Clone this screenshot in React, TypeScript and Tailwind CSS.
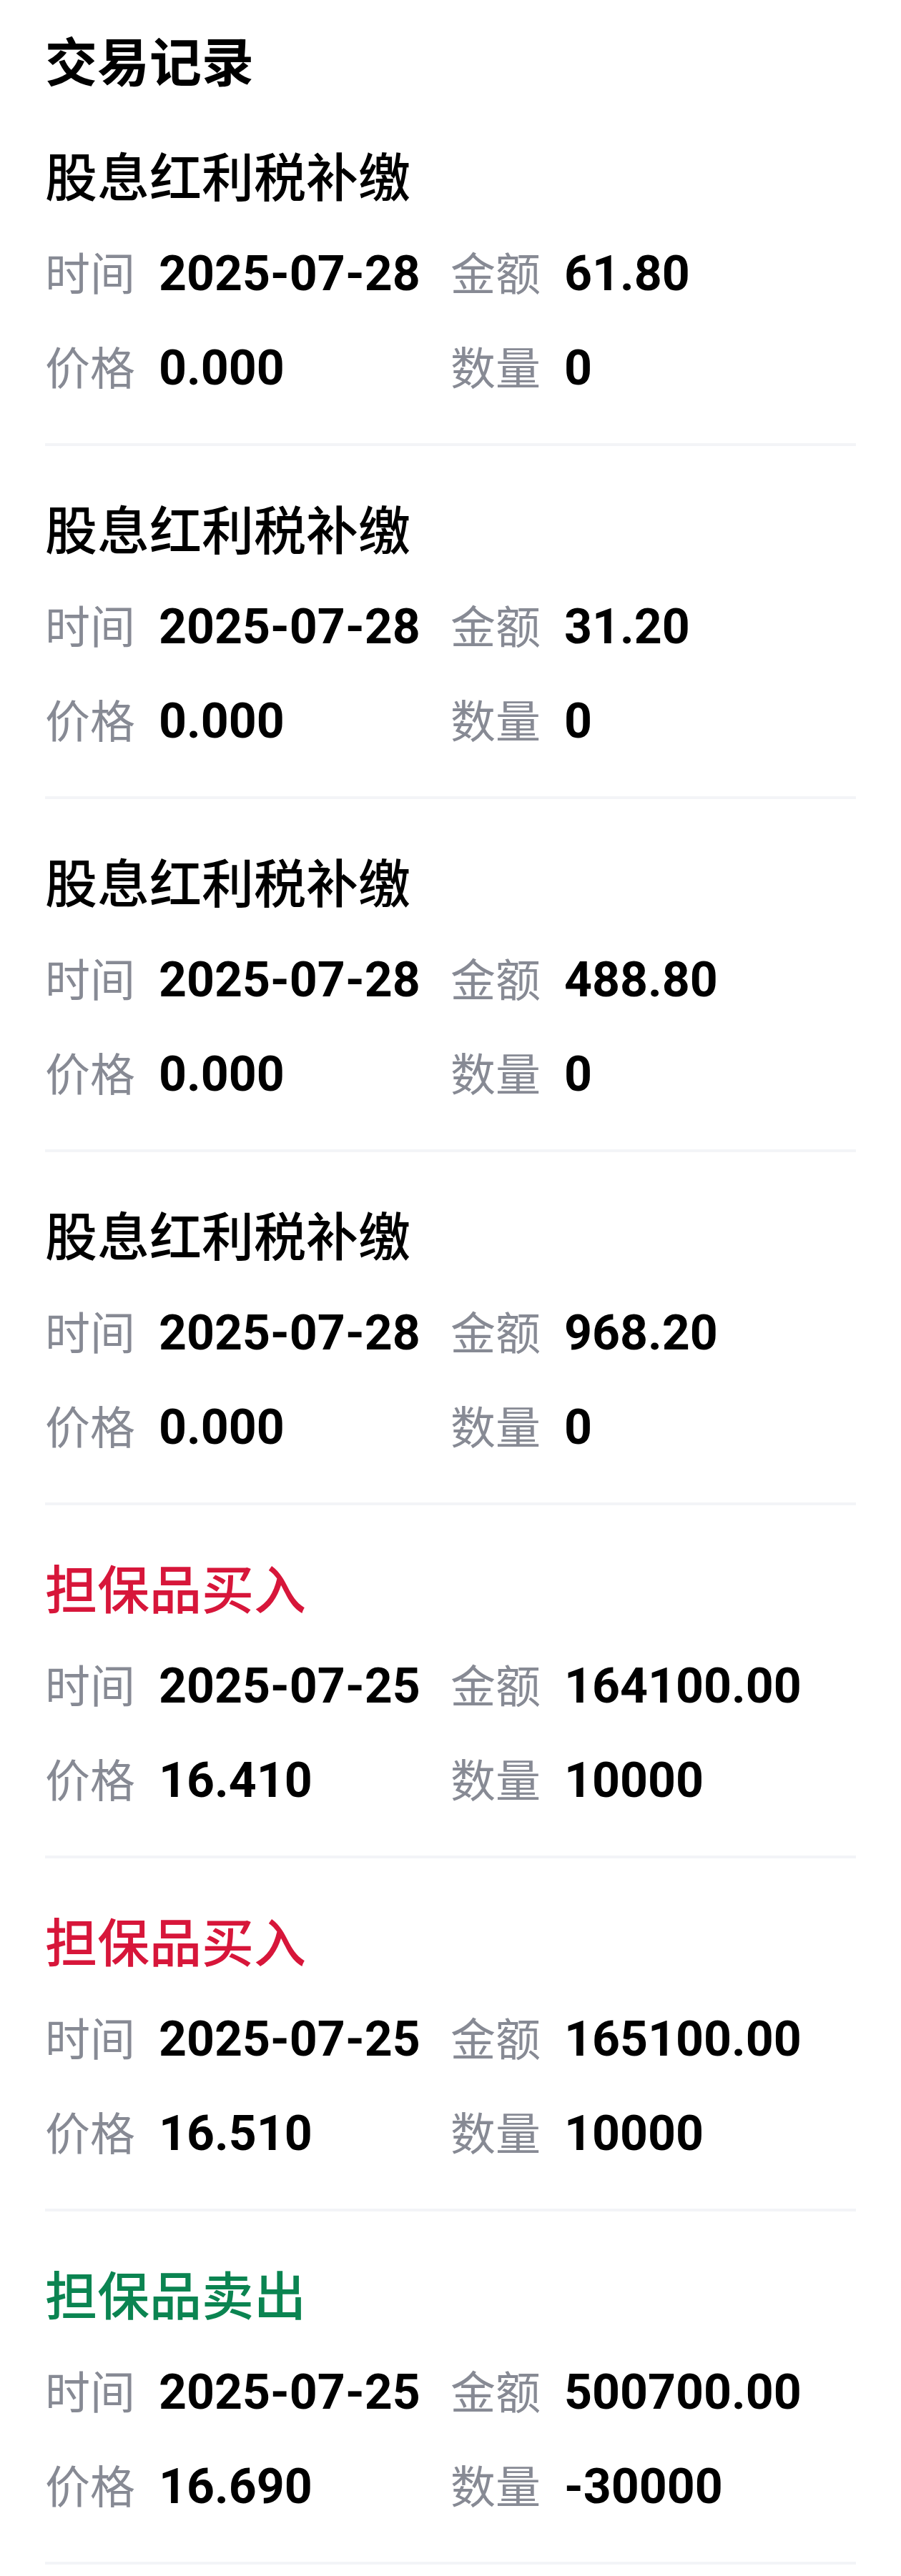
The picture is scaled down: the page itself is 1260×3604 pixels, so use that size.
const records = [
  { title: "股息红利税补缴", kind: "tax", time: "2025-07-28", amount: "61.80", price: "0.000", qty: "0" },
  { title: "股息红利税补缴", kind: "tax", time: "2025-07-28", amount: "31.20", price: "0.000", qty: "0" },
  { title: "股息红利税补缴", kind: "tax", time: "2025-07-28", amount: "488.80", price: "0.000", qty: "0" },
  { title: "股息红利税补缴", kind: "tax", time: "2025-07-28", amount: "968.20", price: "0.000", qty: "0" },
  { title: "担保品买入", kind: "buy", time: "2025-07-25", amount: "164100.00", price: "16.410", qty: "10000" },
  { title: "担保品买入", kind: "buy", time: "2025-07-25", amount: "165100.00", price: "16.510", qty: "10000" },
  { title: "担保品卖出", kind: "sell", time: "2025-07-25", amount: "500700.00", price: "16.690", qty: "-30000" },
];

const titleColor: Record<string, string> = {
  tax: "text-black",
  buy: "text-[#d7163a]",
  sell: "text-[#0b8451]",
};

function Field({ label, value }: { label: string; value: string }) {
  return (
    <div className="flex items-baseline gap-[33px]">
      <span className="text-[63px] text-[#878a94] font-['Noto_Sans_CJK_SC',sans-serif]">
        {label}
      </span>
      <span className="text-[68px] font-bold text-black font-['Roboto','Noto_Sans_CJK_SC',sans-serif]">
        {value}
      </span>
    </div>
  );
}

export default function App() {
  return (
    <main className="min-h-[3604px] bg-white px-[63px] pt-[34px] font-['Noto_Sans_CJK_SC',sans-serif]">
      <h1 className="h-[96px] text-[73px] font-bold leading-[96px] text-black">
        交易记录
      </h1>
      {records.map((r, i) => (
        <section key={i} className="border-b-4 border-[#f3f4f7] pt-[40px] pb-[39px]">
          <h2 className={`h-[147px] text-[73px] font-medium leading-[147px] ${titleColor[r.kind]}`}>
            {r.title}
          </h2>
          <div className="grid h-[132px] grid-cols-2 items-center">
            <Field label="时间" value={r.time} />
            <Field label="金额" value={r.amount} />
          </div>
          <div className="grid h-[132px] grid-cols-2 items-center">
            <Field label="价格" value={r.price} />
            <Field label="数量" value={r.qty} />
          </div>
        </section>
      ))}
    </main>
  );
}
